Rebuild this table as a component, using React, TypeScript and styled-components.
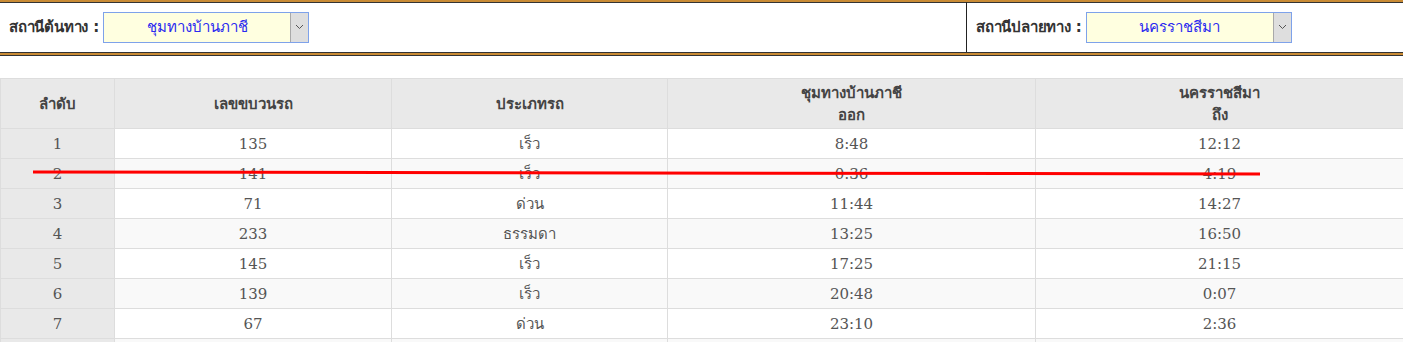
import styled, { createGlobalStyle } from "styled-components";

const GlobalStyle = createGlobalStyle`
  body {
    margin: 0;
    background: #fff;
    font-family: "Liberation Sans", "DejaVu Sans", sans-serif;
  }
`;

interface Train {
  no: number;
  train: string;
  kind: string;
  depart: string;
  arrive: string;
}

const trains: Train[] = [
  { no: 1, train: "135", kind: "เร็ว", depart: "8:48", arrive: "12:12" },
  { no: 2, train: "141", kind: "เร็ว", depart: "0:36", arrive: "4:19" },
  { no: 3, train: "71", kind: "ด่วน", depart: "11:44", arrive: "14:27" },
  { no: 4, train: "233", kind: "ธรรมดา", depart: "13:25", arrive: "16:50" },
  { no: 5, train: "145", kind: "เร็ว", depart: "17:25", arrive: "21:15" },
  { no: 6, train: "139", kind: "เร็ว", depart: "20:48", arrive: "0:07" },
  { no: 7, train: "67", kind: "ด่วน", depart: "23:10", arrive: "2:36" },
  { no: 8, train: "", kind: "", depart: "", arrive: "" },
];

const Page = styled.div`
  position: relative;
  width: 1403px;
  height: 342px;
  overflow: hidden;
`;

const StationBar = styled.div`
  display: grid;
  grid-template-columns: 966px 1fr;
  border-top: 2px solid #c98b35;
  box-shadow: inset 0 1px 0 #333;
  border-bottom: 4px double #333;
  position: relative;
  &::after {
    content: "";
    position: absolute;
    left: 0;
    right: 0;
    bottom: -3px;
    height: 2px;
    background: #c98b35;
  }
`;

const StationCell = styled.div<{ $divider?: boolean }>`
  display: flex;
  align-items: center;
  height: 50px;
  padding-left: 9px;
  border-left: ${(p) => (p.$divider ? "1px solid #222" : "none")};
`;

const Label = styled.span`
  font-family: Tahoma, "DejaVu Sans", sans-serif;
  font-weight: bold;
  font-size: 15px;
  color: #333;
  margin-right: 4px;
  letter-spacing: -0.2px;
`;

const Select = styled.div`
  display: flex;
  width: 204px;
  height: 29px;
  border: 1px solid #7ea2ea;
  background: #ffffe0;
`;

const SelectText = styled.span`
  flex: 1;
  display: flex;
  align-items: center;
  justify-content: center;
  font-family: Tahoma, "DejaVu Sans", sans-serif;
  font-size: 15px;
  color: #2a2af0;
`;

const SelectArrow = styled.span`
  width: 17px;
  display: flex;
  align-items: center;
  justify-content: center;
  background: #dedede;
  border-left: 1px solid #a9a9a9;
`;

const Table = styled.table`
  margin-top: 22px;
  width: 1403px;
  border-collapse: collapse;
  table-layout: fixed;
  color: #555;
`;

const HeadCell = styled.th`
  background: #e9e9e9;
  border: 1px solid #ddd;
  height: 49px;
  padding: 0;
  font-family: Tahoma, "DejaVu Sans", sans-serif;
  font-weight: bold;
  font-size: 15px;
  line-height: 22px;
  color: #444;
`;

const Row = styled.tr<{ $odd: boolean }>`
  background: ${(p) => (p.$odd ? "#fff" : "#f9f9f9")};
`;

const Cell = styled.td<{ $index?: boolean }>`
  height: 29px;
  padding: 0;
  border: 1px solid #ddd;
  text-align: center;
  font-family: "DejaVu Serif", "Liberation Serif", serif;
  font-size: 15px;
  color: #555;
  background: ${(p) => (p.$index ? "#e9e9e9" : "transparent")};
`;

const Strike = styled.svg`
  position: absolute;
  left: 0;
  top: 0;
  pointer-events: none;
`;

function Arrow() {
  return (
    <svg width="9" height="6" viewBox="0 0 9 6">
      <path d="M1 1 L4.5 4.5 L8 1" fill="none" stroke="#555" strokeWidth="1" />
    </svg>
  );
}

function App() {
  return (
    <Page>
      <GlobalStyle />
      <StationBar>
        <StationCell>
          <Label>สถานีต้นทาง :</Label>
          <Select>
            <SelectText>ชุมทางบ้านภาชี</SelectText>
            <SelectArrow>
              <Arrow />
            </SelectArrow>
          </Select>
        </StationCell>
        <StationCell $divider>
          <Label>สถานีปลายทาง :</Label>
          <Select>
            <SelectText>นครราชสีมา</SelectText>
            <SelectArrow>
              <Arrow />
            </SelectArrow>
          </Select>
        </StationCell>
      </StationBar>

      <Table>
        <colgroup>
          <col style={{ width: 114 }} />
          <col style={{ width: 277 }} />
          <col style={{ width: 276 }} />
          <col style={{ width: 368 }} />
          <col style={{ width: 368 }} />
        </colgroup>
        <thead>
          <tr>
            <HeadCell>ลำดับ</HeadCell>
            <HeadCell>เลขขบวนรถ</HeadCell>
            <HeadCell>ประเภทรถ</HeadCell>
            <HeadCell>
              ชุมทางบ้านภาชี
              <br />
              ออก
            </HeadCell>
            <HeadCell>
              นครราชสีมา
              <br />
              ถึง
            </HeadCell>
          </tr>
        </thead>
        <tbody>
          {trains.map((t, i) => (
            <Row key={t.no} $odd={i % 2 === 0}>
              <Cell $index>{t.train ? t.no : ""}</Cell>
              <Cell>{t.train}</Cell>
              <Cell>{t.kind}</Cell>
              <Cell>{t.depart}</Cell>
              <Cell>{t.arrive}</Cell>
            </Row>
          ))}
        </tbody>
      </Table>

      <Strike width="1403" height="342">
        <line x1="33" y1="172" x2="1260" y2="174" stroke="#ff0000" strokeWidth="3" />
      </Strike>
    </Page>
  );
}

export default App;
